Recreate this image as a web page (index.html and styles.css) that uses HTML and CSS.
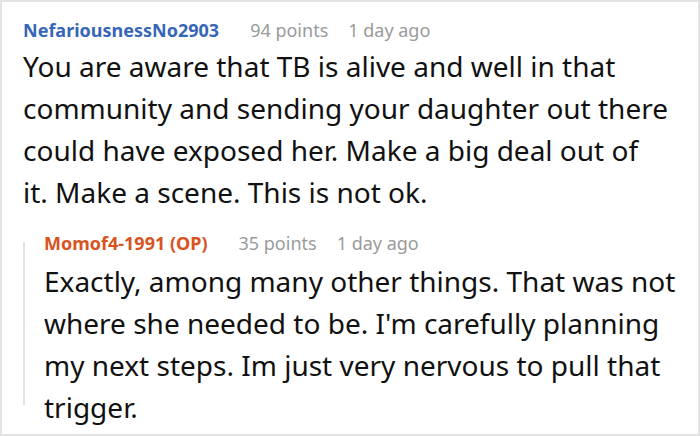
FILE: index.html
```html
<!DOCTYPE html>
<html>
<head>
<meta charset="utf-8">
<link rel="stylesheet" href="styles.css">
</head>
<body>
<div class="thread">
  <div class="comment">
    <div class="meta">
      <span class="author author-blue">NefariousnessNo2903</span>
      <span class="info">94 points</span>
      <span class="info">1 day ago</span>
    </div>
    <p class="text text-top">You are aware that TB is alive and well in that community and sending your daughter out there could have exposed her. Make a big deal out of it. Make a scene. This is not ok.</p>
  </div>
  <div class="reply">
    <div class="meta">
      <span class="author author-op">Momof4-1991 (OP)</span>
      <span class="info">35 points</span>
      <span class="info">1 day ago</span>
    </div>
    <p class="text text-reply">Exactly, among many other things. That was not where she needed to be. I'm carefully planning my next steps. Im just very nervous to pull that trigger.</p>
  </div>
</div>
</body>
</html>
```
FILE: styles.css
```css
html, body {
  margin: 0;
  padding: 0;
  background: #fff;
}
body {
  font-family: "Noto Sans", "Open Sans", sans-serif;
  color: #111;
}
.thread {
  box-sizing: border-box;
  width: 700px;
  height: 436px;
  border: 2px solid #e4e4e4;
  padding: 16px 0 0 21px;
  overflow: hidden;
}
.meta {
  display: flex;
  align-items: baseline;
  font-size: 18px;
  line-height: 24px;
  white-space: nowrap;
}
.author {
  font-weight: 700;
  margin-right: 31px;
}
.author-blue { color: #3666b6; }
.author-op { color: #d9531e; }
.info {
  color: #9a9a9a;
  margin-right: 20px;
}
.text {
  margin: 3px 0 0;
  font-size: 28px;
  line-height: 42px;
}
.text-top {
  width: 646px;
}
.reply {
  position: relative;
  margin-top: 18px;
  padding-left: 21px;
}
.reply::before {
  content: "";
  position: absolute;
  left: 0;
  top: 11px;
  height: 163px;
  width: 2px;
  background: #e2e2e2;
}
.text-reply {
  margin-top: 5px;
  width: 645px;
}
```
